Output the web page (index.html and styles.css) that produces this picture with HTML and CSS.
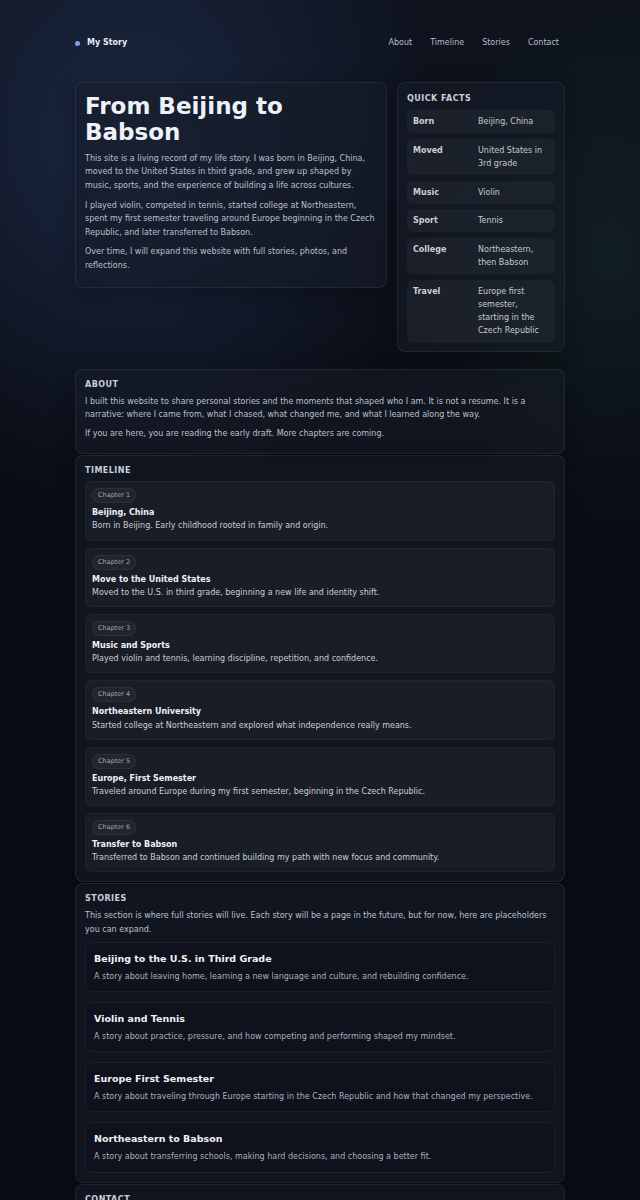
FILE: index.html
```html
<!DOCTYPE html>
<html lang="en">
<head>
<meta charset="utf-8">
<title>My Story</title>
<link rel="stylesheet" href="styles.css">
</head>
<body>
<div class="page">
  <header class="header">
    <div class="brand"><span class="dot"></span>My Story</div>
    <nav class="nav">
      <a href="#about">About</a>
      <a href="#timeline">Timeline</a>
      <a href="#stories">Stories</a>
      <a href="#contact">Contact</a>
    </nav>
  </header>

  <div class="hero">
    <section class="card intro">
      <h1>From Beijing to Babson</h1>
      <p>This site is a living record of my life story. I was born in Beijing, China, moved to the United States in third grade, and grew up shaped by music, sports, and the experience of building a life across cultures.</p>
      <p>I played violin, competed in tennis, started college at Northeastern, spent my first semester traveling around Europe beginning in the Czech Republic, and later transferred to Babson.</p>
      <p>Over time, I will expand this website with full stories, photos, and reflections.</p>
    </section>
    <aside class="card facts">
      <h2>Quick Facts</h2>
      <div class="fact-list">
        <div class="fact"><span class="k">Born</span><span class="v">Beijing, China</span></div>
        <div class="fact"><span class="k">Moved</span><span class="v">United States in 3rd grade</span></div>
        <div class="fact"><span class="k">Music</span><span class="v">Violin</span></div>
        <div class="fact"><span class="k">Sport</span><span class="v">Tennis</span></div>
        <div class="fact"><span class="k">College</span><span class="v">Northeastern, then Babson</span></div>
        <div class="fact"><span class="k">Travel</span><span class="v">Europe first semester, starting in the Czech Republic</span></div>
      </div>
    </aside>
  </div>

  <section class="card section about" id="about">
    <h2>About</h2>
    <p>I built this website to share personal stories and the moments that shaped who I am. It is not a resume. It is a narrative: where I came from, what I chased, what changed me, and what I learned along the way.</p>
    <p>If you are here, you are reading the early draft. More chapters are coming.</p>
  </section>

  <section class="card section" id="timeline">
    <h2>Timeline</h2>
    <div class="items">
      <div class="item"><span class="pill">Chapter 1</span><h3>Beijing, China</h3><p>Born in Beijing. Early childhood rooted in family and origin.</p></div>
      <div class="item"><span class="pill">Chapter 2</span><h3>Move to the United States</h3><p>Moved to the U.S. in third grade, beginning a new life and identity shift.</p></div>
      <div class="item"><span class="pill">Chapter 3</span><h3>Music and Sports</h3><p>Played violin and tennis, learning discipline, repetition, and confidence.</p></div>
      <div class="item"><span class="pill">Chapter 4</span><h3>Northeastern University</h3><p>Started college at Northeastern and explored what independence really means.</p></div>
      <div class="item"><span class="pill">Chapter 5</span><h3>Europe, First Semester</h3><p>Traveled around Europe during my first semester, beginning in the Czech Republic.</p></div>
      <div class="item"><span class="pill">Chapter 6</span><h3>Transfer to Babson</h3><p>Transferred to Babson and continued building my path with new focus and community.</p></div>
    </div>
  </section>

  <section class="card section" id="stories">
    <h2>Stories</h2>
    <p>This section is where full stories will live. Each story will be a page in the future, but for now, here are placeholders you can expand.</p>
    <div class="stories">
      <article class="story"><h3>Beijing to the U.S. in Third Grade</h3><p>A story about leaving home, learning a new language and culture, and rebuilding confidence.</p></article>
      <article class="story"><h3>Violin and Tennis</h3><p>A story about practice, pressure, and how competing and performing shaped my mindset.</p></article>
      <article class="story"><h3>Europe First Semester</h3><p>A story about traveling through Europe starting in the Czech Republic and how that changed my perspective.</p></article>
      <article class="story"><h3>Northeastern to Babson</h3><p>A story about transferring schools, making hard decisions, and choosing a better fit.</p></article>
    </div>
  </section>

  <section class="card section" id="contact">
    <h2>Contact</h2>
    <p>If you want to reach out, you can add your email or social links here.</p>
  </section>
</div>
</body>
</html>
```

FILE: styles.css
```css
* { box-sizing: border-box; }
html { background: #0a0d14; }
body {
  margin: 0;
  min-height: 1200px;
  font-family: "DejaVu Sans", "Noto Sans", sans-serif;
  font-size: 8px;
  line-height: 1.65;
  color: #c4cad4;
  background:
    radial-gradient(ellipse 310px 350px at 130px 150px, rgba(55, 85, 145, 0.32), rgba(55, 85, 145, 0) 100%),
    radial-gradient(ellipse 200px 260px at 610px 260px, rgba(40, 95, 70, 0.18), rgba(40, 95, 70, 0) 100%),
    linear-gradient(180deg, #0e131e 0px, #0a0d15 420px, #0a0d14 100%);
}
.page {
  width: 490px;
  margin: 0 auto;
  padding-top: 35px;
}
.header {
  display: flex;
  justify-content: space-between;
  align-items: center;
  height: 16px;
  padding: 0 6px 0 0;
}
.brand {
  display: flex;
  align-items: center;
  gap: 7px;
  font-weight: bold;
  color: #e8ecf2;
}
.dot {
  width: 5px;
  height: 5px;
  border-radius: 50%;
  background: #7d9cf0;
}
.nav { display: flex; gap: 18px; }
.nav a {
  color: #b6bdc8;
  text-decoration: none;
}
.card {
  background: rgba(22, 28, 40, 0.58);
  border: 1px solid rgba(255, 255, 255, 0.07);
  border-radius: 8px;
  box-shadow: 0 6px 20px rgba(0, 0, 0, 0.25);
}
.hero {
  display: grid;
  grid-template-columns: 13fr 7fr;
  gap: 10px;
  align-items: start;
  margin-top: 31px;
}
.intro { padding: 10px 6px 8px 9px; }
.intro h1 {
  margin: 0 0 7px;
  font-size: 23px;
  line-height: 26px;
  color: #eef1f6;
  font-weight: bold;
}
.intro p { margin: 0 0 6.5px; line-height: 13.4px; color: #b9c0cb; }
.facts { padding: 9px 9px 8px; }
h2 {
  margin: 0 0 4px;
  font-size: 8px;
  line-height: 13px;
  letter-spacing: 0.06em;
  text-transform: uppercase;
  color: #c9d0da;
  font-weight: bold;
}
.facts h2 { margin-bottom: 5px; }
.fact-list { display: flex; flex-direction: column; gap: 5.5px; }
.fact {
  display: grid;
  grid-template-columns: 65px 1fr;
  padding: 5px 6px;
  border-radius: 6px;
  background: rgba(255, 255, 255, 0.04);
}
.fact .k { font-weight: bold; color: #c9cfd8; }
.fact .v { color: #c4cad4; }
.section {
  padding: 8px 9px 9px;
  margin-top: 1px;
}
.section.about { margin-top: 17px; padding-bottom: 7px; }
.section > p { margin: 0 0 6px; color: #b9c0cb; }
.items { display: flex; flex-direction: column; gap: 7px; margin-top: 4px; }
.item {
  display: flex;
  flex-direction: column;
  align-items: flex-start;
  padding: 6px 6px 7px;
  border-radius: 6px;
  background: rgba(255, 255, 255, 0.035);
  border: 1px solid rgba(255, 255, 255, 0.035);
}
.pill {
  display: block;
  font-size: 6.5px;
  line-height: 7px;
  padding: 3px 5px;
  border-radius: 8px;
  color: #9ea6b2;
  background: rgba(255, 255, 255, 0.04);
  border: 1px solid rgba(255, 255, 255, 0.05);
}
.item h3 {
  margin: 3px 0 0;
  font-size: 8px;
  line-height: 13.2px;
  color: #eef1f6;
  font-weight: bold;
}
.item p { margin: 0; color: #c8ced8; }
.stories { display: flex; flex-direction: column; gap: 10px; margin-top: 3px; }
.story {
  padding: 9px 8px 8px;
  border-radius: 7px;
  background: rgba(10, 13, 20, 0.25);
  border: 1px solid rgba(255, 255, 255, 0.06);
}
.story h3 {
  margin: 0 0 5px;
  font-size: 9.5px;
  line-height: 13px;
  color: #eef1f6;
  font-weight: bold;
}
.story p { margin: 0; color: #a9b0bb; }
```
